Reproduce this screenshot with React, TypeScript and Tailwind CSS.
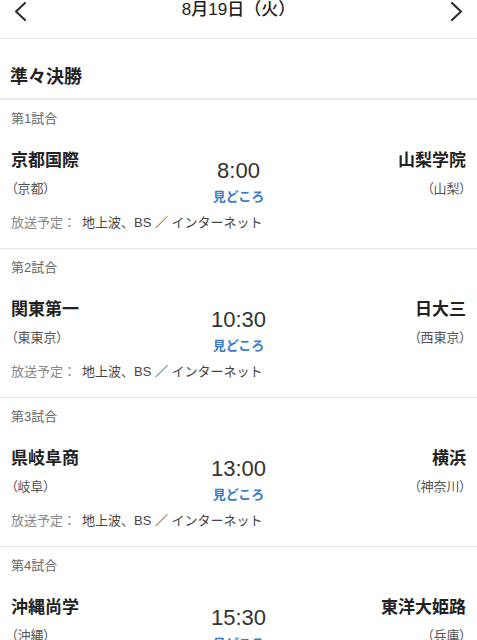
const font = { fontFamily: '"Liberation Sans", "Noto Sans CJK JP", sans-serif' };

type Match = {
  no: number;
  home: string;
  homePref: string;
  time: string;
  away: string;
  awayPref: string;
};

const matches: Match[] = [
  { no: 1, home: "京都国際", homePref: "（京都）", time: "8:00", away: "山梨学院", awayPref: "（山梨）" },
  { no: 2, home: "関東第一", homePref: "（東東京）", time: "10:30", away: "日大三", awayPref: "（西東京）" },
  { no: 3, home: "県岐阜商", homePref: "（岐阜）", time: "13:00", away: "横浜", awayPref: "（神奈川）" },
  { no: 4, home: "沖縄尚学", homePref: "（沖縄）", time: "15:30", away: "東洋大姫路", awayPref: "（兵庫）" },
];

function Chevron({ dir }: { dir: "left" | "right" }) {
  return (
    <svg width="12" height="19" viewBox="0 0 12 19" className="mt-[2px]" fill="none">
      <path
        d={dir === "left" ? "M11 1 L2 9.5 L11 18" : "M1 1 L10 9.5 L1 18"}
        stroke="#2a2a2a"
        strokeWidth="2"
        strokeLinecap="round"
        strokeLinejoin="round"
      />
    </svg>
  );
}

function MatchRow({ m }: { m: Match }) {
  return (
    <div className="px-[11px] pt-[9px] pb-[15px] border-b border-[#e8e8e8]">
      <div className="text-[13px] leading-[20px] text-[#666]">第{m.no}試合</div>
      <div className="grid grid-cols-3 mt-[21px]">
        <div>
          <div className="text-[17px] leading-[22px] font-bold text-[#222] whitespace-nowrap">{m.home}</div>
          <div className="mt-[8px] text-[13px] leading-[18px] text-[#555] [font-feature-settings:'palt']">{m.homePref}</div>
        </div>
        <div className="text-center pt-[8px]">
          <div className="text-[22px] leading-[26px] text-[#333]">{m.time}</div>
          <div className="mt-[4px] text-[13px] leading-[18px] font-bold text-[#3a7dc6]">見どころ</div>
        </div>
        <div className="text-right">
          <div className="text-[17px] leading-[22px] font-bold text-[#222] whitespace-nowrap">{m.away}</div>
          <div className="mt-[8px] text-[13px] leading-[18px] text-[#555] [font-feature-settings:'palt']">{m.awayPref}</div>
        </div>
      </div>
      <div className="mt-[7px] text-[13px] leading-[20px] flex">
        <span className="text-[#888]">放送予定：</span>
        <span className="ml-[6px] text-[#444]">地上波、BS ／ インターネット</span>
      </div>
    </div>
  );
}

export default function App() {
  return (
    <div className="w-[477px] h-[640px] overflow-hidden bg-white" style={font}>
      <div className="h-[39px] flex justify-between items-start px-[14px] border-b border-[#e6e6e6]">
        <Chevron dir="left" />
        <div className="text-[17px] leading-[20px] font-medium text-[#222]">8月19日（火）</div>
        <Chevron dir="right" />
      </div>
      <div className="px-[10px] pt-[25px] pb-[8px] border-b-2 border-[#e8e8e8]">
        <div className="text-[18px] leading-[26px] font-bold text-[#222]">準々決勝</div>
      </div>
      {matches.map((m) => (
        <MatchRow key={m.no} m={m} />
      ))}
    </div>
  );
}
